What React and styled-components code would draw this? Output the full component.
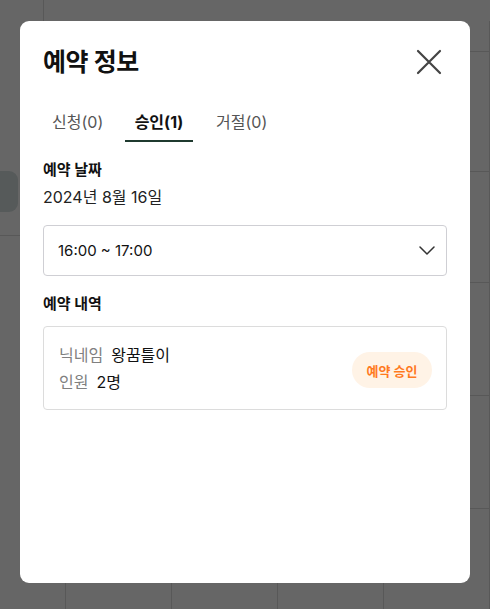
import React, { useState } from 'react';
import styled, { createGlobalStyle } from 'styled-components';

const GlobalStyle = createGlobalStyle`
  * { box-sizing: border-box; }
  html, body { margin: 0; padding: 0; height: 100%; }
  body {
    font-family: Inter, "Noto Sans CJK KR", "Noto Sans", sans-serif;
    color: #111;
    background: #fff;
    overflow: hidden;
  }
`;

const TABS = [
  { key: 'request', label: '신청', count: 0 },
  { key: 'approve', label: '승인', count: 1 },
  { key: 'reject', label: '거절', count: 0 },
];

const App = () => {
  const [tab, setTab] = useState('approve');
  return (
    <>
      <GlobalStyle />
      <Page>
        <TopBar>
          <TopCell />
        </TopBar>
        <Body>
          <Sidebar>
            <SideButton />
            <SideDivider />
          </Sidebar>
          <Calendar>
            {Array.from({ length: 24 }).map((_, i) => (
              <Cell key={i} />
            ))}
          </Calendar>
        </Body>
      </Page>
      <Overlay>
        <Modal>
          <Header>
            <Title>예약 정보</Title>
            <CloseButton aria-label="닫기">
              <svg width="26" height="26" viewBox="0 0 26 26" fill="none">
                <path d="M2 2L24 24M24 2L2 24" stroke="#444" strokeWidth="2.2" strokeLinecap="round" />
              </svg>
            </CloseButton>
          </Header>
          <Tabs>
            {TABS.map((t) => (
              <Tab key={t.key} $active={tab === t.key} onClick={() => setTab(t.key)}>
                {t.label}({t.count})
              </Tab>
            ))}
          </Tabs>
          <Label>예약 날짜</Label>
          <DateText>2024년 8월 16일</DateText>
          <Select>
            <span>16:00 ~ 17:00</span>
            <svg width="16" height="9" viewBox="0 0 16 9" fill="none">
              <path d="M1 1L8 8L15 1" stroke="#333" strokeWidth="1.5" strokeLinecap="round" strokeLinejoin="round" />
            </svg>
          </Select>
          <Label>예약 내역</Label>
          <Card>
            <Info>
              <InfoRow>
                <Key>닉네임</Key>
                <Value>왕꿈틀이</Value>
              </InfoRow>
              <InfoRow>
                <Key>인원</Key>
                <Value>2명</Value>
              </InfoRow>
            </Info>
            <Badge>예약 승인</Badge>
          </Card>
        </Modal>
      </Overlay>
    </>
  );
};

export default App;

const Page = styled.div`
  display: flex;
  flex-direction: column;
  height: 100vh;
`;

const TopBar = styled.div`
  height: 21px;
  display: flex;
  flex-shrink: 0;
`;

const TopCell = styled.div`
  width: 44px;
  border-right: 1px solid #dcdcdc;
`;

const Body = styled.div`
  display: flex;
  flex: 1;
`;

const Sidebar = styled.div`
  width: 66px;
  flex-shrink: 0;
  padding-top: 150px;
  border-right: 1px solid #dcdcdc;
`;

const SideButton = styled.div`
  width: 18px;
  height: 41px;
  border-radius: 0 9px 9px 0;
  background: #d6e0e0;
`;

const SideDivider = styled.div`
  margin-top: 23px;
  border-bottom: 1px solid #dcdcdc;
`;

const Calendar = styled.div`
  display: grid;
  grid-template-columns: repeat(4, 106px);
  grid-template-rows: 31px 120px 111px 113px 113px 113px;
  align-content: start;
`;

const Cell = styled.div`
  border-right: 1px solid #dcdcdc;
  border-bottom: 1px solid #dcdcdc;
`;

const Overlay = styled.div`
  position: fixed;
  inset: 0;
  background: rgba(0, 0, 0, 0.6);
  display: flex;
  justify-content: center;
  align-items: flex-start;
  padding-top: 21px;
`;

const Modal = styled.div`
  width: 450px;
  height: 562px;
  background: #fff;
  border-radius: 9px;
  padding: 24px 23px;
  display: flex;
  flex-direction: column;
`;

const Header = styled.div`
  display: flex;
  align-items: center;
  justify-content: space-between;
  height: 34px;
`;

const Title = styled.h2`
  margin: 0;
  font-size: 25px;
  font-weight: 700;
  line-height: 34px;
  color: #111;
  letter-spacing: -0.4px;
`;

const CloseButton = styled.button`
  border: none;
  background: none;
  padding: 0;
  margin-right: 5px;
  display: flex;
  cursor: pointer;
`;

const Tabs = styled.div`
  display: flex;
  gap: 14px;
  margin-top: 23px;
`;

const Tab = styled.button`
  border: none;
  background: none;
  font-family: inherit;
  font-size: 16px;
  line-height: 24px;
  padding: 8px 9px 6px;
  width: 68px;
  color: ${(p) => (p.$active ? '#111' : '#555')};
  font-weight: ${(p) => (p.$active ? 700 : 400)};
  border-bottom: 2px solid ${(p) => (p.$active ? '#1f3a2f' : 'transparent')};
  cursor: pointer;
  white-space: nowrap;
`;

const Label = styled.div`
  margin-top: 17px;
  font-size: 15px;
  font-weight: 700;
  line-height: 22px;
  color: #111;
`;

const DateText = styled.div`
  margin-top: 4px;
  font-size: 16px;
  line-height: 24px;
  color: #222;
`;

const Select = styled.div`
  margin-top: 16px;
  height: 51px;
  border: 1px solid #cfcfd4;
  border-radius: 4px;
  display: flex;
  align-items: center;
  justify-content: space-between;
  padding: 0 11px 0 14px;
  font-size: 15px;
  color: #111;
`;

const Card = styled.div`
  margin-top: 11px;
  height: 84px;
  border: 1px solid #dcdcdc;
  border-radius: 4px;
  display: flex;
  align-items: center;
  justify-content: space-between;
  padding: 0 14px 0 15px;
`;

const Info = styled.div`
  display: flex;
  flex-direction: column;
  gap: 3px;
`;

const InfoRow = styled.div`
  display: flex;
  gap: 8px;
  font-size: 16px;
  line-height: 24px;
`;

const Key = styled.span`
  color: #808080;
`;

const Value = styled.span`
  color: #111;
`;

const Badge = styled.div`
  width: 80px;
  height: 36px;
  border-radius: 18px;
  background: #fff3e6;
  color: #ff7a1f;
  font-size: 13px;
  font-weight: 700;
  display: flex;
  align-items: center;
  justify-content: center;
  margin-top: 4px;
`;
